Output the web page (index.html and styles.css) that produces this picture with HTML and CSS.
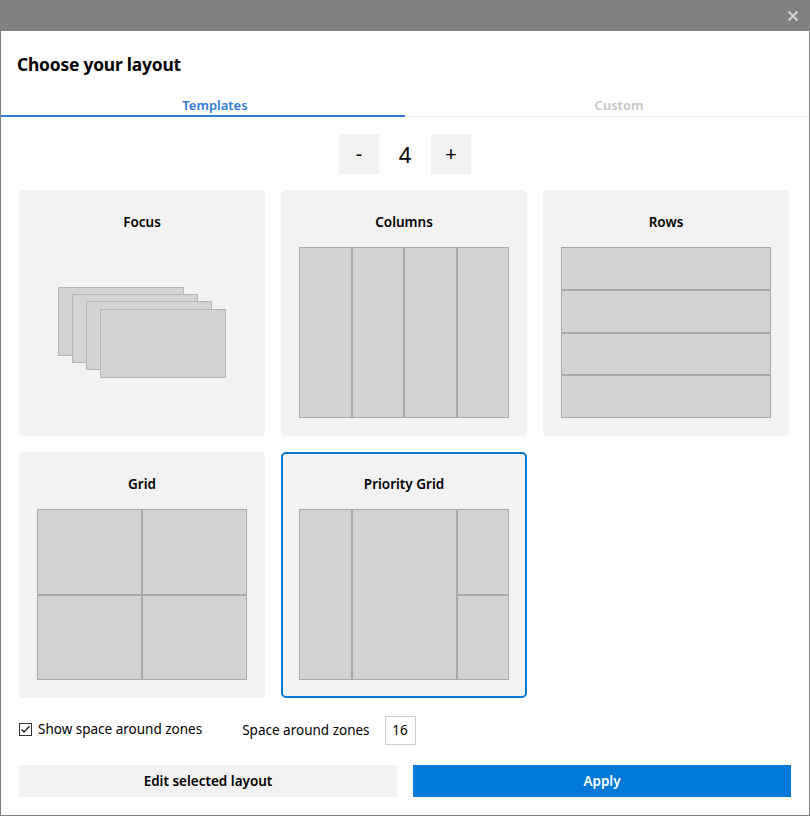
FILE: index.html
```html
<!DOCTYPE html>
<html>
<head>
<meta charset="utf-8">
<link rel="stylesheet" href="styles.css">
</head>
<body>
<div class="window">
  <div class="titlebar">
    <svg class="close" width="12" height="12" viewBox="0 0 12 12"><path d="M1.5 1.5 L10.5 10.5 M10.5 1.5 L1.5 10.5" stroke="#d4d4d4" stroke-width="2" fill="none"/></svg>
  </div>
  <div class="content">
    <h1 class="heading">Choose your layout</h1>
    <div class="tabs">
      <div class="tab active">Templates</div>
      <div class="tab">Custom</div>
    </div>
    <div class="counter">
      <div class="cbtn">-</div>
      <div class="count">4</div>
      <div class="cbtn">+</div>
    </div>
    <div class="cards">
      <div class="card">
        <div class="card-title">Focus</div>
        <div class="preview focus-area">
          <div class="stack">
            <div class="fz" style="left:0;top:0"></div>
            <div class="fz" style="left:14px;top:7px"></div>
            <div class="fz" style="left:28px;top:14px"></div>
            <div class="fz" style="left:42px;top:22px"></div>
          </div>
        </div>
      </div>
      <div class="card">
        <div class="card-title">Columns</div>
        <div class="preview cols">
          <div class="zone"></div><div class="zone"></div><div class="zone"></div><div class="zone"></div>
        </div>
      </div>
      <div class="card">
        <div class="card-title">Rows</div>
        <div class="preview rows">
          <div class="zone"></div><div class="zone"></div><div class="zone"></div><div class="zone"></div>
        </div>
      </div>
      <div class="card">
        <div class="card-title">Grid</div>
        <div class="preview grid">
          <div class="zone"></div><div class="zone"></div><div class="zone"></div><div class="zone"></div>
        </div>
      </div>
      <div class="card selected">
        <div class="card-title">Priority Grid</div>
        <div class="preview pgrid">
          <div class="zone z-left"></div>
          <div class="zone z-mid"></div>
          <div class="zone z-rt"></div>
          <div class="zone z-rb"></div>
        </div>
      </div>
    </div>
    <div class="options">
      <label class="check">
        <svg width="13" height="13" viewBox="0 0 13 13"><rect x="0.5" y="0.5" width="12" height="12" fill="#fff" stroke="#333"/><path d="M2.5 6.5 L5 9 L10.5 3.2" stroke="#222" stroke-width="1.4" fill="none"/></svg>
        <span>Show space around zones</span>
      </label>
      <span class="space-label">Space around zones</span>
      <div class="num">16</div>
    </div>
    <div class="actions">
      <div class="btn secondary">Edit selected layout</div>
      <div class="btn primary">Apply</div>
    </div>
  </div>
</div>
</body>
</html>
```
FILE: styles.css
```css
* { box-sizing: border-box; }
html, body { margin: 0; padding: 0; }
body {
  width: 810px;
  height: 816px;
  overflow: hidden;
  background: #fff;
  font-family: "Noto Sans", "Open Sans", sans-serif;
  color: #000;
}
.window { width: 810px; height: 816px; display: flex; flex-direction: column; }
.titlebar {
  height: 31px;
  background: #808080;
  display: flex;
  justify-content: flex-end;
  align-items: center;
  padding-right: 11px;
  flex: none;
}
.close { display: block; }
.content {
  flex: 1;
  border: 1px solid #808080;
  border-top: none;
  display: flex;
  flex-direction: column;
}
.heading {
  margin: 0;
  padding: 21px 0 0 16px;
  height: 62px;
  font-size: 17.4px;
  font-weight: 700;
  line-height: 24px;
  letter-spacing: -0.2px;
}
.tabs {
  display: flex;
  border-bottom: 1px solid #ebebeb;
  height: 24px;
}
.tab {
  flex: 1;
  text-align: center;
  font-size: 13px;
  font-weight: 600;
  color: #c4c4c4;
  line-height: 20px;
  padding: 2px 0 0 24px;
}
.tab.active {
  color: #2f7bd4;
  border-bottom: 2px solid #2f7bd4;
  margin-bottom: -1px;
}
.counter {
  display: flex;
  justify-content: center;
  align-items: center;
  margin-top: 17px;
  height: 40px;
}
.cbtn {
  width: 40px;
  height: 40px;
  background: #f2f2f2;
  display: flex;
  align-items: center;
  justify-content: center;
  font-size: 20px;
  line-height: 1;
}
.count {
  width: 52px;
  text-align: center;
  font-size: 22px;
  line-height: 40px;
}
.cards {
  margin-top: 16px;
  padding: 0 18px;
  display: grid;
  grid-template-columns: repeat(3, 246px);
  grid-auto-rows: 246px;
  gap: 16px;
}
.card {
  background: #f2f2f2;
  border-radius: 5px;
  border: 2px solid transparent;
  padding: 20px 16px 16px;
  display: flex;
  flex-direction: column;
}
.card.selected { border-color: #0078d7; }
.card-title {
  text-align: center;
  font-size: 13.5px;
  font-weight: 600;
  line-height: 20px;
  height: 20px;
  margin-bottom: 15px;
}
.preview { flex: 1; }
.zone { background: #d3d3d3; border: 1px solid #a9a9a9; }
.focus-area { display: flex; align-items: center; justify-content: center; }
.stack { position: relative; width: 168px; height: 91px; }
.fz { position: absolute; width: 126px; height: 69px; background: #d3d3d3; border: 1px solid #b4b4b4; }
.cols { display: flex; }
.cols .zone { flex: 1; }
.rows { display: flex; flex-direction: column; }
.rows .zone { flex: 1; }
.grid { display: grid; grid-template-columns: 1fr 1fr; grid-template-rows: 1fr 1fr; }
.pgrid {
  display: grid;
  grid-template-columns: 53px 105px 52px;
  grid-template-rows: 1fr 1fr;
}
.z-left { grid-column: 1; grid-row: 1 / 3; }
.z-mid { grid-column: 2; grid-row: 1 / 3; }
.z-rt { grid-column: 3; grid-row: 1; }
.z-rb { grid-column: 3; grid-row: 2; }
.options {
  display: flex;
  align-items: center;
  padding-left: 18px;
  margin-top: 18px;
  height: 28px;
  font-size: 13.5px;
}
.check { display: flex; align-items: center; gap: 6px; margin-top: -2px; }
.check svg { display: block; }
.space-label { margin-left: 40px; }
.num {
  margin-left: 15px;
  width: 31px;
  height: 29px;
  border: 1px solid #ccc;
  display: flex;
  align-items: center;
  justify-content: center;
}
.actions {
  display: flex;
  gap: 16px;
  padding: 0 18px;
  margin-top: 21px;
}
.btn {
  flex: 1;
  height: 32px;
  display: flex;
  align-items: center;
  justify-content: center;
  font-size: 13.5px;
  font-weight: 600;
}
.secondary { background: #f2f2f2; }
.primary { background: #0078d7; color: #fff; }
```
